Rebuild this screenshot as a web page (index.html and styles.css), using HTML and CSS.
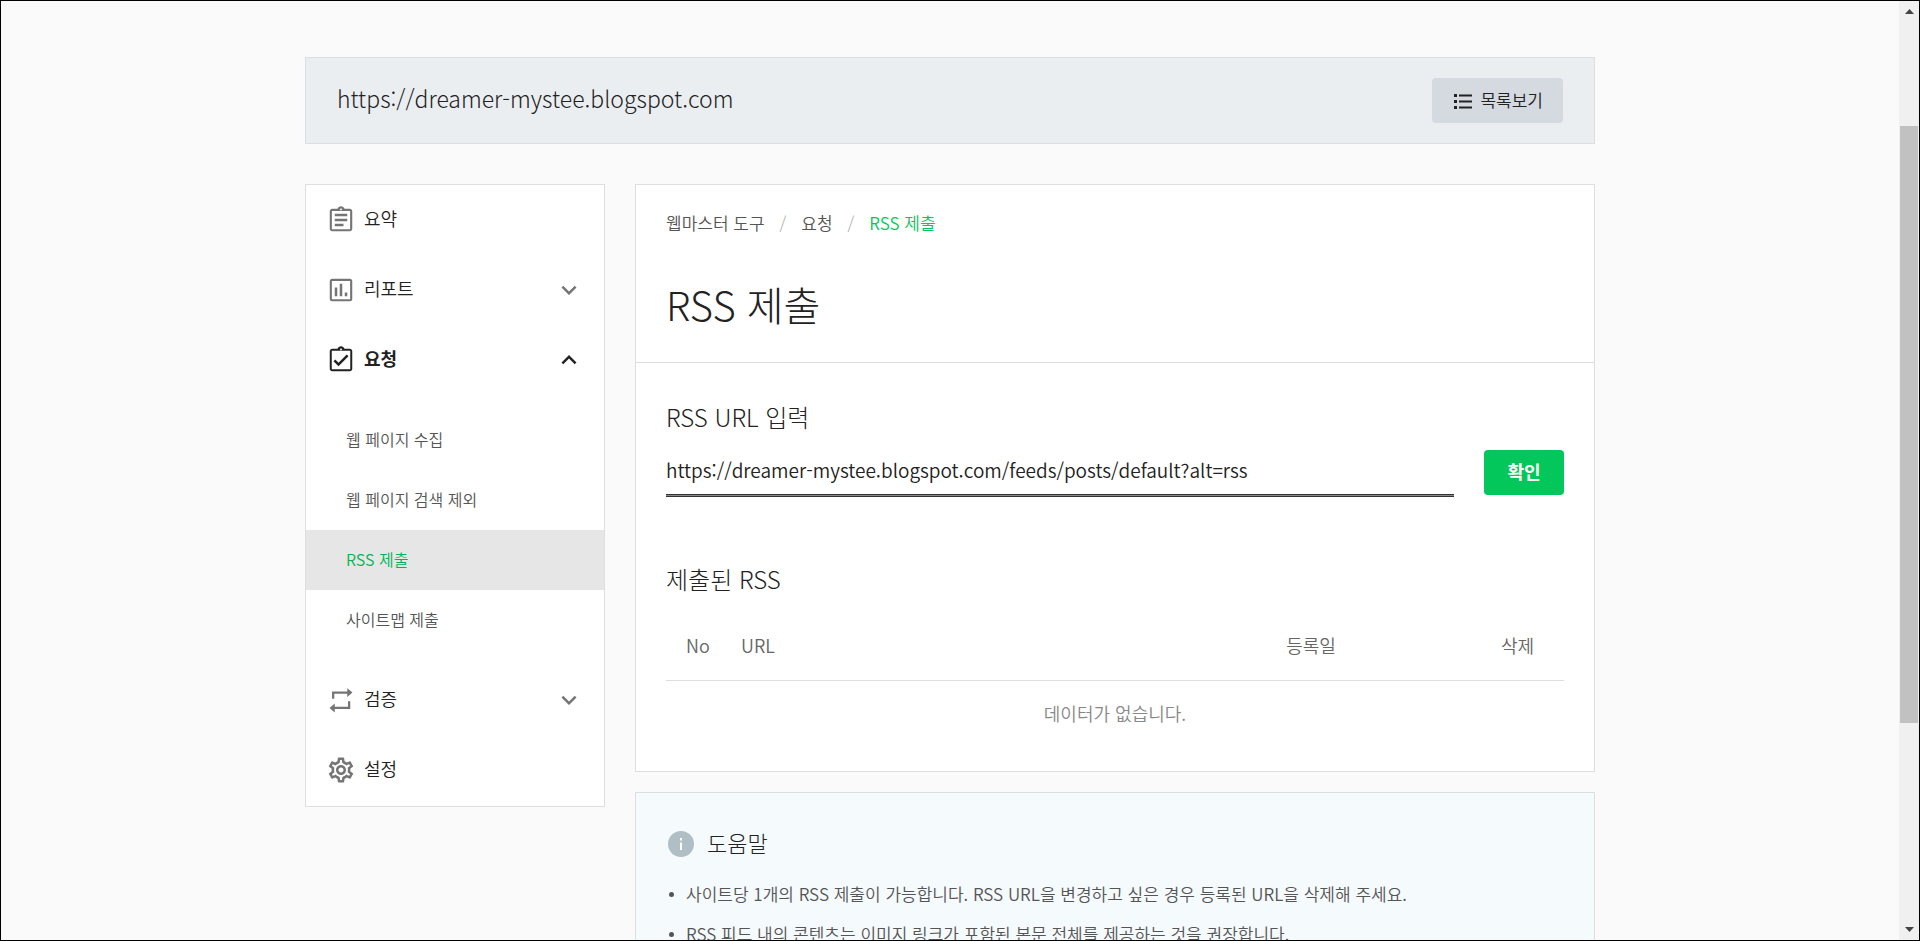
FILE: index.html
```html
<!DOCTYPE html>
<html lang="ko">
<head>
<meta charset="utf-8">
<title>RSS 제출</title>
<link rel="stylesheet" href="styles.css">
</head>
<body>
<div class="window">
  <div class="viewport">
    <div class="container">
      <header class="site-bar">
        <p class="site-url">https://dreamer-mystee.blogspot.com</p>
        <button type="button" class="btn btn-list">
          <svg class="icon-list" viewBox="0 0 18 16" aria-hidden="true"><path d="M0 1h3v3H0zM0 7h3v3H0zM0 13h3v3H0zM5 1.500h13v2H5zM5 7.500h13v2H5zM5 13.500h13v2H5z"/></svg>
          <span class="btn-label">목록보기</span>
        </button>
      </header>

      <div class="columns">
        <nav class="sidebar" aria-label="메뉴">
          <a class="menu-item" href="#">
            <svg class="icon" viewBox="0 0 24 24" aria-hidden="true"><path d="M7 15h7v2H7zm0-4h10v2H7zm0-4h10v2H7zm12-4h-4.180C14.400 1.840 13.300 1 12 1s-2.400.84-2.820 2H5c-1.100 0-2 .9-2 2v14c0 1.100.9 2 2 2h14c1.100 0 2-.9 2-2V5c0-1.100-.9-2-2-2zm-7-.25c.41 0 .75.34.75.75s-.34.75-.75.75-.75-.34-.75-.75.34-.75.750-.75zM19.300 19.300H4.700V4.700h14.600z" fill-rule="evenodd"/></svg>
            <span class="menu-label">요약</span>
          </a>
          <a class="menu-item" href="#">
            <svg class="icon" viewBox="0 0 24 24" aria-hidden="true"><path d="M5 3h14a2 2 0 0 1 2 2v14a2 2 0 0 1-2 2H5a2 2 0 0 1-2-2V5a2 2 0 0 1 2-2zM4.700 4.700v14.600h14.600V4.700zM7 10h2v7H7zM11 7h2v10h-2zM15 14h2v3h-2z" fill-rule="evenodd"/></svg>
            <span class="menu-label">리포트</span>
            <svg class="icon" viewBox="0 0 24 24" aria-hidden="true"><path d="M16.590 8.590L12 13.170 7.410 8.590 6 10l6 6 6-6z"/></svg>
          </a>
          <a class="menu-item menu-open" href="#">
            <svg class="icon" viewBox="0 0 24 24" aria-hidden="true"><path d="M19 3h-4.180C14.400 1.840 13.300 1 12 1s-2.400.84-2.820 2H5c-1.100 0-2 .9-2 2v14c0 1.100.9 2 2 2h14c1.100 0 2-.9 2-2V5c0-1.100-.9-2-2-2zm-7-.25c.41 0 .75.34.75.75s-.34.75-.75.75-.75-.34-.75-.75.34-.75.750-.75zM19.400 19.400H4.600V4.600h14.800zM18 9l-1.410-1.420L10 14.170l-2.590-2.580L6 13l4 4z" fill-rule="evenodd"/></svg>
            <span class="menu-label">요청</span>
            <svg class="icon" viewBox="0 0 24 24" aria-hidden="true"><path d="M12 8l-6 6 1.410 1.410L12 10.830l4.590 4.580L18 14z"/></svg>
          </a>
          <div class="submenu">
            <a class="submenu-item" href="#">웹 페이지 수집</a>
            <a class="submenu-item" href="#">웹 페이지 검색 제외</a>
            <a class="submenu-item submenu-active" href="#" aria-current="page">RSS 제출</a>
            <a class="submenu-item" href="#">사이트맵 제출</a>
          </div>
          <a class="menu-item" href="#">
            <svg class="icon" viewBox="0 0 24 24" aria-hidden="true"><path d="M4.800 11V5.100H17V2.500l4.200 3.500L17 9.600V6.900H6.600V11zM19.400 13v6.200H7v2.700l-4.200-3.600L7 14.700v2.700h10.600V13z"/></svg>
            <span class="menu-label">검증</span>
            <svg class="icon" viewBox="0 0 24 24" aria-hidden="true"><path d="M16.590 8.590L12 13.170 7.410 8.590 6 10l6 6 6-6z"/></svg>
          </a>
          <a class="menu-item" href="#">
            <svg class="icon" viewBox="0 0 24 24" aria-hidden="true"><path d="M19.430 12.980c.04-.32.07-.64.07-.98 0-.34-.03-.66-.07-.98l2.110-1.650c.19-.15.24-.42.12-.64l-2-3.460c-.09-.16-.26-.25-.44-.25-.06 0-.12.01-.17.030l-2.490 1c-.52-.4-1.080-.73-1.690-.98l-.38-2.650C14.460 2.180 14.250 2 14 2h-4c-.25 0-.46.18-.49.42l-.38 2.650c-.61.25-1.170.59-1.690.98l-2.490-1c-.06-.02-.12-.03-.18-.03-.17 0-.34.09-.43.25l-2 3.460c-.13.22-.07.49.12.64l2.110 1.650c-.04.32-.07.65-.07.98 0 .33.030.66.070.98l-2.110 1.650c-.19.15-.24.42-.12.64l2 3.460c.09.16.26.25.44.25.06 0 .12-.01.17-.03l2.490-1c.52.4 1.080.73 1.690.98l.38 2.650c.03.24.24.42.49.42h4c.25 0 .46-.18.49-.42l.38-2.650c.61-.25 1.170-.59 1.690-.98l2.490 1c.06.020.12.030.18.030.17 0 .34-.09.43-.25l2-3.460c.12-.22.07-.49-.12-.64l-2.110-1.650zm-1.980-1.710c.04.31.050.52.050.73 0 .21-.02.43-.05.73l-.14 1.130.89.7 1.080.84-.7 1.210-1.270-.51-1.040-.42-.9.68c-.43.32-.84.56-1.250.73l-1.060.43-.16 1.130-.2 1.350h-1.400l-.19-1.350-.16-1.130-1.060-.43c-.43-.18-.83-.41-1.230-.71l-.91-.7-1.060.43-1.270.51-.7-1.210 1.080-.84.89-.7-.14-1.130c-.03-.31-.05-.54-.05-.74s.02-.43.05-.73l.14-1.130-.89-.7-1.080-.84.7-1.210 1.270.51 1.040.42.9-.68c.43-.32.84-.56 1.250-.73l1.060-.43.16-1.130.2-1.350h1.390l.19 1.350.16 1.130 1.060.43c.43.18.83.41 1.230.71l.91.7 1.060-.43 1.270-.51.7 1.210-1.070.85-.89.7.14 1.130zM12 8c-2.210 0-4 1.790-4 4s1.790 4 4 4 4-1.790 4-4-1.790-4-4-4zm0 6c-1.100 0-2-.9-2-2s.9-2 2-2 2 .9 2 2-.9 2-2 2z"/></svg>
            <span class="menu-label">설정</span>
          </a>
        </nav>

        <main class="content">
          <section class="card">
            <div class="card-head">
              <ol class="breadcrumb">
                <li><a href="#">웹마스터 도구</a></li>
                <li><a href="#">요청</a></li>
                <li><a class="crumb-current" href="#" aria-current="page">RSS 제출</a></li>
              </ol>
              <h1 class="page-title">RSS 제출</h1>
            </div>
            <div class="card-body">
              <form class="rss-form">
                <label class="section-title" for="rss-url">RSS URL 입력</label>
                <div class="input-row">
                  <input class="url-input" id="rss-url" type="text" value="https://dreamer-mystee.blogspot.com/feeds/posts/default?alt=rss">
                  <button type="submit" class="btn btn-submit">확인</button>
                </div>
              </form>
              <h2 class="section-title">제출된 RSS</h2>
              <table class="rss-table">
                <thead>
                  <tr><th class="col-no">No</th><th class="col-url">URL</th><th class="col-date">등록일</th><th class="col-delete">삭제</th></tr>
                </thead>
                <tbody>
                  <tr><td colspan="4">데이터가 없습니다.</td></tr>
                </tbody>
              </table>
            </div>
          </section>

          <section class="help">
            <h2 class="help-title">
              <svg class="icon-info" viewBox="0 0 26 26" aria-hidden="true"><circle cx="13" cy="13" r="13" fill="#b0bec5"/><path d="M12 7h2v2.500h-2zM12 11.500h2V19h-2z" fill="#fff"/></svg>
              <span class="help-label">도움말</span>
            </h2>
            <ul class="help-list">
              <li>사이트당 1개의 RSS 제출이 가능합니다. RSS URL을 변경하고 싶은 경우 등록된 URL을 삭제해 주세요.</li>
              <li>RSS 피드 내의 콘텐츠는 이미지 링크가 포함된 본문 전체를 제공하는 것을 권장합니다.</li>
            </ul>
          </section>
        </main>
      </div>
    </div>
  </div>
  <div class="scrollbar" aria-hidden="true">
    <svg class="scroll-arrow" viewBox="0 0 9 5"><path d="M4.500 0L9 5H0z"/></svg>
    <div class="scroll-track"><div class="scroll-thumb"></div></div>
    <svg class="scroll-arrow" viewBox="0 0 9 5"><path d="M0 0h9L4.500 5z"/></svg>
  </div>
</div>
</body>
</html>
```
FILE: styles.css
```css
* {
  box-sizing: border-box;
}

body {
  margin: 0;
  background: #fafafa;
  color: #222;
  font-family: "Noto Sans CJK KR", sans-serif;
  font-size: 18px;
  font-weight: 350;
  line-height: 24px;
}

a {
  color: inherit;
  text-decoration: none;
}

h1, h2, p, ul, ol {
  margin: 0;
  padding: 0;
  font-weight: 300;
}

.window {
  display: flex;
  height: 100vh;
  border: 1px solid #000;
  overflow: hidden;
}

.viewport {
  flex: 1;
  overflow: hidden;
  padding: 56px 24px 0;
}

.container {
  max-width: 1290px;
  margin: 0 auto;
}

.site-bar {
  display: flex;
  align-items: center;
  justify-content: space-between;
  margin-bottom: 40px;
  padding: 20px 31px;
  border: 1px solid #dcdfe1;
  background: #ebeef1;
}

.site-url {
  padding-bottom: 6px;
  font-size: 23px;
}

.btn {
  height: 45px;
  border: 0;
  border-radius: 4px;
  font-family: inherit;
  cursor: pointer;
}

.btn-list {
  display: flex;
  align-items: center;
  gap: 8px;
  padding: 0 20px 0 22px;
  background: #d5d9e0;
  color: #222;
  font-size: 17px;
  font-weight: 350;
}

.btn-label {
  padding-bottom: 3px;
}

.icon-list {
  width: 18px;
  height: 16px;
  fill: #222;
}

.columns {
  display: flex;
  align-items: flex-start;
  gap: 30px;
}

.sidebar {
  flex: 0 0 300px;
  padding-bottom: 1px;
  border: 1px solid #dedede;
  background: #fff;
}

.menu-item {
  display: flex;
  align-items: center;
  gap: 8px;
  height: 70px;
  padding: 0 20px;
}

.menu-label {
  flex: 1;
  padding-bottom: 4px;
}

.menu-open {
  font-weight: 700;
}

.icon {
  width: 30px;
  height: 30px;
  fill: #757575;
}

.menu-open .icon {
  fill: #222;
}

.submenu {
  padding: 15px 0;
}

.submenu-item {
  display: block;
  padding: 0 40px 2px;
  color: #555;
  font-size: 16px;
  line-height: 58px;
}

.submenu-active {
  background: #e6e6e6;
  color: #03b352;
}

.content {
  flex: 1;
  min-width: 0;
}

.card {
  margin-bottom: 20px;
  border: 1px solid #dedede;
  background: #fff;
}

.card-head {
  padding: 26px 30px 28px;
  border-bottom: 1px solid #dedede;
}

.breadcrumb {
  display: flex;
  margin-bottom: 39px;
  color: #555;
  font-size: 17px;
  font-weight: 350;
  list-style: none;
}

.breadcrumb li + li::before {
  content: "/";
  padding: 0 15px;
  color: #aaa;
  font-weight: 300;
}

.crumb-current {
  color: #03c75a;
}

.page-title {
  font-size: 40px;
  line-height: 60px;
}

.card-body {
  padding: 39px 30px 26px;
}

.section-title {
  display: block;
  font-size: 24px;
  font-weight: 300;
  line-height: 30px;
}

.rss-form {
  margin-bottom: 69px;
}

.input-row {
  display: flex;
  gap: 30px;
  margin-top: 18px;
}

.url-input {
  flex: 1;
  min-width: 0;
  height: 45px;
  padding: 0 0 6px;
  border: 0;
  border-bottom: 1px solid #333;
  box-shadow: 0 1px #888, 0 2px #333;
  background: none;
  color: #222;
  font: inherit;
  font-size: 19px;
  outline: 0;
}

.btn-submit {
  width: 80px;
  padding-bottom: 4px;
  background: #03c75a;
  color: #fff;
  font-size: 18px;
  font-weight: 700;
}

.rss-table {
  width: 100%;
  margin-top: 17px;
  border-spacing: 0;
  table-layout: fixed;
}

.rss-table th {
  padding: 22px 0 23px;
  border-bottom: 1px solid #dedede;
  color: #666;
  font-weight: 350;
}

.col-no {
  width: 64px;
}

.rss-table .col-url {
  padding-left: 11px;
  text-align: left;
}

.col-date {
  width: 320px;
}

.col-delete {
  width: 93px;
}

.rss-table td {
  padding: 20px 0;
  color: #888;
  text-align: center;
}

.help {
  padding: 34px 30px;
  border: 1px solid #dcdfe1;
  background: #f5fafd;
}

.help-title {
  display: flex;
  align-items: center;
  gap: 13px;
  margin-bottom: 13px;
  padding-left: 2px;
  font-size: 22px;
  line-height: 30px;
}

.help-label {
  padding-bottom: 4px;
}

.icon-info {
  width: 26px;
  height: 26px;
}

.help-list {
  color: #555;
  font-size: 17px;
  font-weight: 350;
  line-height: 40px;
  list-style: none;
}

.help-list li {
  display: flex;
  align-items: center;
  gap: 12px;
  padding-left: 3px;
}

.help-list li::before {
  content: "";
  width: 5px;
  height: 5px;
  border-radius: 50%;
  background: #555;
}

.scrollbar {
  display: flex;
  flex-direction: column;
  align-items: center;
  flex: 0 0 20px;
  padding: 8px 1px;
  background: #f0f0f0;
}

.scroll-arrow {
  width: 9px;
  height: 5px;
  fill: #444;
}

.scroll-track {
  flex: 1;
  align-self: stretch;
  padding: 112px 0 204px;
}

.scroll-thumb {
  height: 100%;
  background: #c1c1c1;
}
```
